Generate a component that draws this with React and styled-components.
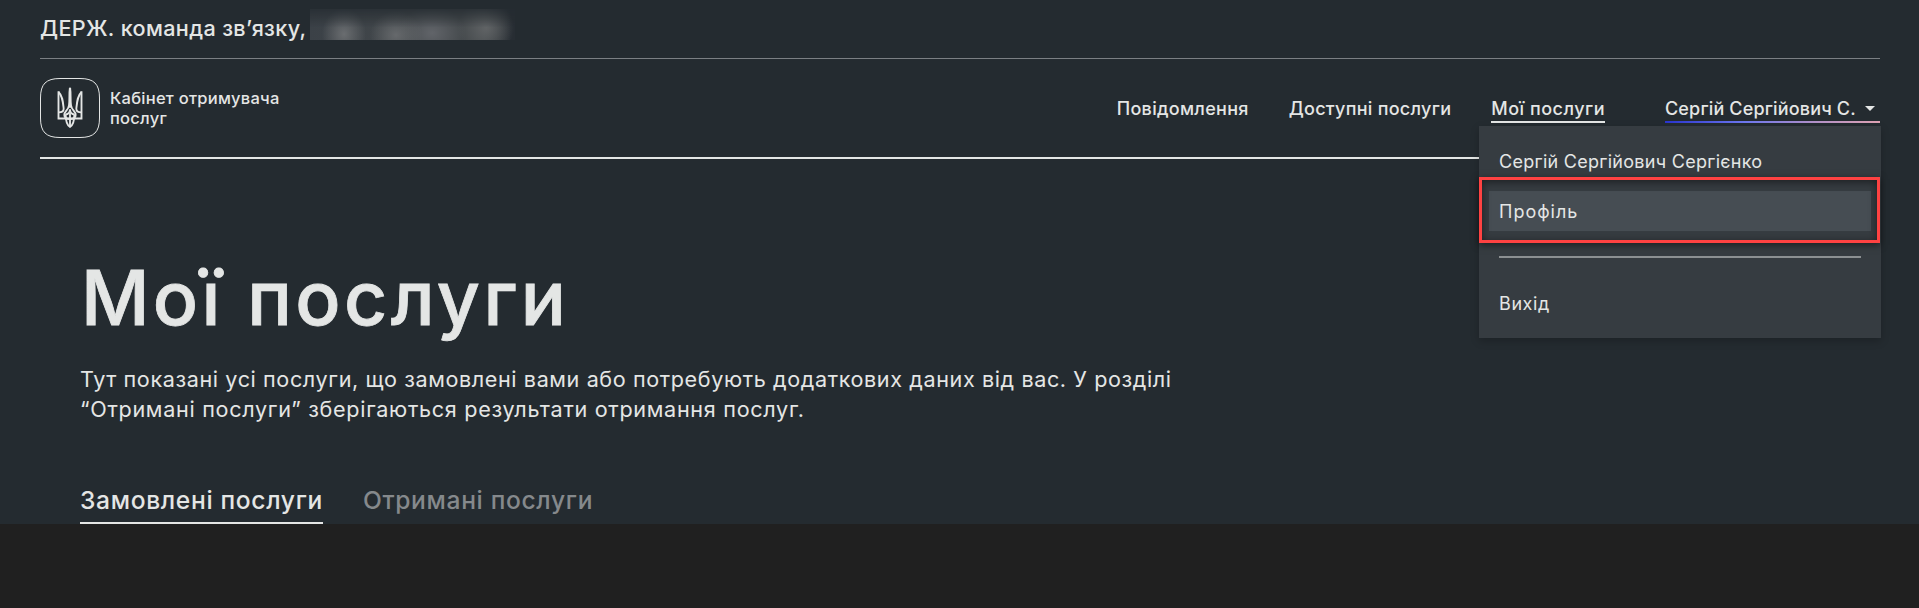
import React from "react";
import styled, { createGlobalStyle } from "styled-components";

const ink = "#e4e6e5";

const GlobalStyle = createGlobalStyle`
  * { box-sizing: border-box; }
  body {
    margin: 0;
    background: #202020;
    color: ${ink};
    font-family: Inter, "Noto Sans", sans-serif;
  }
`;

const Page = styled.div`
  height: 524px;
  background: #242b30;
  display: flex;
  flex-direction: column;
`;

const Header = styled.header`
  padding: 0 39px 0 40px;
`;

const TopBar = styled.div`
  height: 59px;
  padding-bottom: 2px;
  border-bottom: 1px solid #7b7f83;
  display: flex;
  align-items: center;
  gap: 3px;
`;

const Team = styled.span`
  font-size: 21.6px;
  font-weight: 500;
  line-height: 31px;
  letter-spacing: 0.36px;
  white-space: nowrap;
`;

const Redacted = styled.span`
  width: 205px;
  height: 31px;
  margin-top: -7px;
  background:
    radial-gradient(ellipse 22px 26px at 34px 25px, #6a6d70 0%, transparent 100%),
    radial-gradient(ellipse 26px 24px at 86px 26px, #66696c 0%, transparent 100%),
    radial-gradient(ellipse 34px 26px at 122px 24px, #616469 0%, transparent 100%),
    radial-gradient(ellipse 28px 28px at 176px 19px, #606365 0%, transparent 100%),
    linear-gradient(90deg, #3b4147, #43484b 50%, #43484b 85%, #272d33 98%);
  mask-image: linear-gradient(180deg, rgba(0, 0, 0, 0.25), #000 60%);
`;

const MainBar = styled.div`
  height: 100px;
  border-bottom: 2px solid ${ink};
  display: flex;
  align-items: center;
  justify-content: space-between;
`;

const Brand = styled.div`
  display: flex;
  align-items: center;
  gap: 10px;
`;

const BrandName = styled.div`
  width: 180px;
  font-size: 16.5px;
  font-weight: 500;
  line-height: 20px;
  letter-spacing: 0.25px;
`;

const Nav = styled.nav`
  display: flex;
  align-items: center;
  gap: 40px;
`;

const NavItem = styled.a`
  height: 30px;
  padding-top: 3px;
  border-bottom: 2px solid ${(p) => (p.$active ? ink : "transparent")};
  font-size: 18px;
  font-weight: 500;
  line-height: 25px;
  letter-spacing: ${(p) => p.$tracking}px;
  white-space: nowrap;
`;

const UserMenu = styled.div`
  position: relative;
  width: 215px;
  margin-left: 20px;
`;

const UserButton = styled(NavItem)`
  display: flex;
  align-items: center;
  justify-content: space-between;
  padding-right: 5px;
  border-bottom: 0;
  background: linear-gradient(90deg, #2a35cf 0%, #6e78ef 37%, #b391c8 70%, #e0a3b4 100%)
    bottom / 100% 2px no-repeat;
  padding-bottom: 2px;
`;

const Caret = styled.span`
  border: 5px solid transparent;
  border-top-color: ${ink};
  border-bottom: 0;
`;

const Dropdown = styled.div`
  position: absolute;
  z-index: 1;
  top: 33px;
  right: -1px;
  width: 402px;
  height: 212px;
  padding: 15px 10px;
  background: #363c41;
  box-shadow: 0 3px 8px rgba(0, 0, 0, 0.22);
`;

const MenuItem = styled.div`
  height: 40px;
  padding: 1px 10px 0;
  background: ${(p) => (p.$hovered ? "#464d53" : "transparent")};
  margin-bottom: ${(p) => p.$gap || 0}px;
  font-size: 18px;
  line-height: 39px;
  letter-spacing: ${(p) => p.$tracking}px;
  white-space: nowrap;
`;

const Divider = styled.div`
  height: 2px;
  margin: 0 10px 25px;
  background: #8c9092;
`;

const Highlight = styled.div`
  position: absolute;
  top: 51px;
  left: 0;
  width: 401px;
  height: 66px;
  border: 3px solid #ff4242;
  box-shadow: 0 2px 7px rgba(0, 0, 0, 0.5), inset 0 2px 8px rgba(0, 0, 0, 0.5);
`;

const Main = styled.main`
  flex: 1;
  padding: 99px 80px 0;
  display: flex;
  flex-direction: column;
`;

const Title = styled.h1`
  margin: 0 0 26px;
  padding-left: 1px;
  font-size: 75px;
  font-weight: 500;
  -webkit-text-stroke: 0.8px ${ink};
  line-height: 80px;
  letter-spacing: 3.4px;
`;

const Lead = styled.p`
  margin: 0;
  font-size: 21.6px;
  line-height: 30px;
  letter-spacing: ${(p) => p.$tracking}px;
  white-space: nowrap;
`;

const Tabs = styled.div`
  margin-top: auto;
  display: flex;
  gap: 40px;
`;

const Tab = styled.div`
  height: 39px;
  border-bottom: 2px solid ${(p) => (p.$active ? ink : "transparent")};
  color: ${(p) => (p.$active ? ink : "#85898c")};
  font-size: 24.6px;
  font-weight: 500;
  line-height: 30px;
  letter-spacing: 0.66px;
  white-space: nowrap;
`;

const Emblem = () => (
  <svg width="60" height="60" viewBox="0 0 60 60" fill="none" stroke={ink}>
    <path
      d="M20 .5H40C54 .5 59.5 6 59.5 20V40C59.5 54 54 59.5 40 59.5H20C6 59.5 .5 54 .5 40V20C.5 6 6 .5 20 .5Z"
      strokeWidth="1"
    />
    <g transform="translate(10 2) scale(.33333)" strokeWidth="5.600" strokeLinejoin="miter">
      <path d="M25.500 34V115.500H94.500V34" />
      <path d="M25.500 36C38 48 39 66 41 86C41 93 35 97 26 97" />
      <path d="M94.500 36C82 48 81 66 79 86C79 93 85 97 94 97" />
      <path d="M60 27C57 40 60 60 57 76C55 92 43 92 43 105C43 113 51 117 60 117M60 27C63 40 60 60 63 76C65 92 77 92 77 105C77 113 69 117 60 117" />
      <path d="M47 103C47 125 51 136 60 141C69 136 73 125 73 103" />
      <path d="M47 103C55 103 60 96 60 88C60 96 65 103 73 103M60 100V139" />
      <path d="M60 26V80" strokeWidth="7" strokeLinecap="round" />
    </g>
  </svg>
);

export default function App() {
  return (
    <>
      <GlobalStyle />
      <Page>
        <Header>
          <TopBar>
            <Team>ДЕРЖ. команда зв’язку,</Team>
            <Redacted />
          </TopBar>
          <MainBar>
            <Brand>
              <Emblem />
              <BrandName>Кабінет отримувача послуг</BrandName>
            </Brand>
            <Nav>
              <NavItem $tracking={0.29}>Повідомлення</NavItem>
              <NavItem $tracking={0.28}>Доступні послуги</NavItem>
              <NavItem $tracking={0.5} $active>Мої послуги</NavItem>
              <UserMenu>
                <UserButton $tracking={0.16}>
                  Сергій Сергійович С.
                  <Caret />
                </UserButton>
                <Dropdown>
                  <MenuItem $tracking={0.28} $gap={10}>Сергій Сергійович Сергієнко</MenuItem>
                  <MenuItem $tracking={1} $gap={25} $hovered>Профіль</MenuItem>
                  <Divider />
                  <MenuItem $tracking={0.6}>Вихід</MenuItem>
                  <Highlight />
                </Dropdown>
              </UserMenu>
            </Nav>
          </MainBar>
        </Header>
        <Main>
          <Title>Мої послуги</Title>
          <Lead $tracking={0.6}>
            Тут показані усі послуги, що замовлені вами або потребують додаткових даних від вас. У розділі
          </Lead>
          <Lead $tracking={0.69}>“Отримані послуги” зберігаються результати отримання послуг.</Lead>
          <Tabs>
            <Tab $active>Замовлені послуги</Tab>
            <Tab>Отримані послуги</Tab>
          </Tabs>
        </Main>
      </Page>
    </>
  );
}
